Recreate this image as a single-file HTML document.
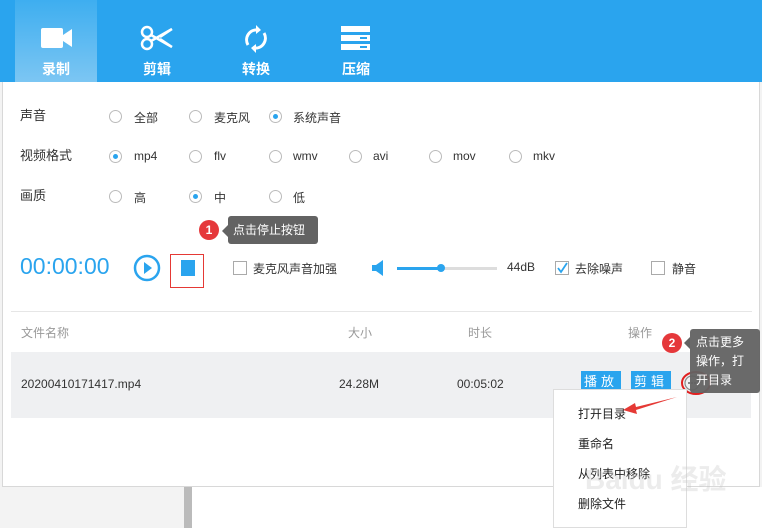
<!DOCTYPE html>
<html><head><meta charset="utf-8"><style>
*{margin:0;padding:0;box-sizing:border-box}
body{width:762px;height:528px;position:relative;overflow:hidden;background:#f3f3f3;font-family:"Liberation Sans","Noto Sans CJK SC",sans-serif;font-size:13px;color:#333}
.a{position:absolute}
.win{left:2px;top:0;width:758px;height:487px;background:#fff;border:1px solid #d8d8d8;border-top:none}
.top{left:0;top:0;width:762px;height:82px;background:#2aa4ee}
.tab{top:0;width:82px;height:82px;color:#fff;font-size:14px;font-weight:bold;text-align:center}
.tab span{position:absolute;left:0;right:0;top:59px}
.lbl{font-size:13px;color:#333}
.r{width:13px;height:13px;border:1px solid #bbb;border-radius:50%}
.r.on::after{content:"";position:absolute;left:3px;top:3px;width:5px;height:5px;border-radius:50%;background:#2aa4ee}
.cb{width:14px;height:14px;border:1px solid #aaa;background:#fff}
.t{font-size:12px;color:#333}
.g{color:#999;font-size:12px}
.btn{background:#2aa4ee;color:#fff;font-size:13px;height:22px;line-height:22px;text-align:center;letter-spacing:4px}
.tip{background:#636363;color:#fff;font-size:12px;border-radius:3px}
.num{width:20px;height:20px;border-radius:50%;background:#e5383b;color:#fff;font-size:12px;font-weight:bold;text-align:center;line-height:20px}
.mi{font-size:12px;color:#222;left:578px}
</style></head><body>
<div class="a" style="left:184px;top:487px;width:8px;height:41px;background:#bbb"></div>
<div class="a" style="left:192px;top:487px;width:570px;height:41px;background:#fff"></div>
<div class="a win"></div>
<div class="a top"></div>
<div class="a tab" style="left:15px;background:linear-gradient(#3eaef0,#7cc6f3)">
<svg class="a" style="left:26px;top:27px" width="32" height="22"><rect x="0" y="1" width="22" height="20" rx="2" fill="#fff"/><path d="M22 8 L31 2 V20 L22 14Z" fill="#fff"/></svg><span>录制</span></div>
<div class="a tab" style="left:116px">
<svg class="a" style="left:24px;top:25px" width="34" height="26" fill="none" stroke="#fff" stroke-width="2.5"><circle cx="7" cy="7" r="5"/><circle cx="7" cy="19" r="5"/><path d="M11 10 L32 22 M11 16 L32 4 M20 12 L32 4 M20 14 L32 22"/></svg><span>剪辑</span></div>
<div class="a tab" style="left:215px">
<svg class="a" style="left:27px;top:23px" width="28" height="32" fill="none" stroke="#fff" stroke-width="3"><path d="M6 22 A10 10 0 0 1 16 7"/><path d="M22 10 A10 10 0 0 1 12 25"/><path d="M14 2 L19 7 L14 11Z M14 21 L9 25 L14 30Z" fill="#fff" stroke="none"/></svg><span>转换</span></div>
<div class="a tab" style="left:315px">
<svg class="a" style="left:26px;top:26px" width="30" height="24"><rect x="0" y="0" width="29" height="6" fill="#fff"/><rect x="0" y="9" width="29" height="6" fill="#fff"/><rect x="0" y="18" width="29" height="6" fill="#fff"/><rect x="19" y="11" width="7" height="2" fill="#2aa4ee"/><rect x="19" y="20" width="7" height="2" fill="#2aa4ee"/></svg><span>压缩</span></div>

<div class="a lbl" style="left:20px;top:105px">声音</div>
<div class="a lbl" style="left:20px;top:145px">视频格式</div>
<div class="a lbl" style="left:20px;top:185px">画质</div>
<div class="a r" style="left:109px;top:110px"></div><div class="a t" style="left:134px;top:109px">全部</div>
<div class="a r" style="left:189px;top:110px"></div><div class="a t" style="left:214px;top:109px">麦克风</div>
<div class="a r on" style="left:269px;top:110px"></div><div class="a t" style="left:293px;top:109px">系统声音</div>
<div class="a r on" style="left:109px;top:150px"></div><div class="a t" style="left:134px;top:149px">mp4</div>
<div class="a r" style="left:189px;top:150px"></div><div class="a t" style="left:214px;top:149px">flv</div>
<div class="a r" style="left:269px;top:150px"></div><div class="a t" style="left:293px;top:149px">wmv</div>
<div class="a r" style="left:349px;top:150px"></div><div class="a t" style="left:373px;top:149px">avi</div>
<div class="a r" style="left:429px;top:150px"></div><div class="a t" style="left:453px;top:149px">mov</div>
<div class="a r" style="left:509px;top:150px"></div><div class="a t" style="left:533px;top:149px">mkv</div>
<div class="a r" style="left:109px;top:190px"></div><div class="a t" style="left:134px;top:189px">高</div>
<div class="a r on" style="left:189px;top:190px"></div><div class="a t" style="left:214px;top:189px">中</div>
<div class="a r" style="left:269px;top:190px"></div><div class="a t" style="left:293px;top:189px">低</div>

<div class="a num" style="left:199px;top:220px">1</div>
<div class="a tip" style="left:228px;top:216px;width:90px;height:28px;line-height:28px;padding-left:5px">点击停止按钮</div>
<div class="a" style="left:222px;top:225px;border:6px solid transparent;border-right-color:#636363;border-left:none"></div>

<div class="a" style="left:20px;top:253px;font-size:23px;color:#2aa4ee">00:00:00</div>
<svg class="a" style="left:133px;top:254px" width="28" height="28"><circle cx="14" cy="14" r="12" fill="none" stroke="#2aa4ee" stroke-width="2.5"/><path d="M11 8 L19 14 L11 20Z" fill="#2aa4ee"/></svg>
<div class="a" style="left:170px;top:254px;width:34px;height:34px;border:1px solid #e53935"></div>
<div class="a" style="left:181px;top:260px;width:14px;height:16px;background:#2aa4ee"></div>
<div class="a cb" style="left:233px;top:261px"></div><div class="a t" style="left:253px;top:260px">麦克风声音加强</div>
<svg class="a" style="left:372px;top:259px" width="14" height="18"><path d="M0 6 H4 L11 1 V17 L4 12 H0Z" fill="#2aa4ee"/></svg>
<div class="a" style="left:397px;top:267px;width:100px;height:3px;background:#ddd"></div>
<div class="a" style="left:397px;top:267px;width:44px;height:3px;background:#2aa4ee"></div>
<div class="a" style="left:437px;top:264px;width:8px;height:8px;border-radius:50%;background:#2aa4ee"></div>
<div class="a t" style="left:507px;top:260px">44dB</div>
<div class="a cb" style="left:555px;top:261px"></div>
<svg class="a" style="left:556px;top:262px" width="12" height="12"><path d="M2 6 L5 10 L11 1" fill="none" stroke="#2aa4ee" stroke-width="1.8"/></svg>
<div class="a t" style="left:575px;top:260px">去除噪声</div>
<div class="a cb" style="left:651px;top:261px"></div><div class="a t" style="left:672px;top:260px">静音</div>

<div class="a" style="left:11px;top:311px;width:741px;height:1px;background:#e6e6e6"></div>
<div class="a g" style="left:21px;top:324px">文件名称</div>
<div class="a g" style="left:348px;top:324px">大小</div>
<div class="a g" style="left:468px;top:324px">时长</div>
<div class="a g" style="left:628px;top:324px">操作</div>
<div class="a" style="left:11px;top:352px;width:740px;height:66px;background:#eff0f2"></div>
<div class="a t" style="left:21px;top:377px">20200410171417.mp4</div>
<div class="a t" style="left:339px;top:377px">24.28M</div>
<div class="a t" style="left:457px;top:377px">00:05:02</div>
<div class="a btn" style="left:581px;top:371px;width:40px">播放</div>
<div class="a btn" style="left:631px;top:371px;width:40px">剪辑</div>
<svg class="a" style="left:674px;top:366px" width="40" height="34"><circle cx="18" cy="17" r="7" fill="none" stroke="#888" stroke-width="1.2"/><circle cx="15" cy="17" r="1" fill="#666"/><circle cx="18" cy="17" r="1" fill="#666"/><circle cx="21" cy="17" r="1" fill="#666"/><ellipse cx="22" cy="17" rx="14" ry="11" fill="none" stroke="#e02020" stroke-width="2"/></svg>

<div class="a num" style="left:662px;top:333px">2</div>
<div class="a" style="left:684px;top:337px;border:6px solid transparent;border-right-color:#636363;border-left:none"></div>
<div class="a tip" style="left:690px;top:329px;width:70px;height:64px;padding:4px 6px;line-height:19px;opacity:.95">点击更多操作，打开目录</div>

<div class="a" style="left:553px;top:389px;width:134px;height:139px;background:#fff;border:1px solid #ddd"></div>
<div class="a mi" style="top:405px">打开目录</div>
<div class="a mi" style="top:435px">重命名</div>
<div class="a mi" style="top:465px">从列表中移除</div>
<div class="a mi" style="top:495px">删除文件</div>
<svg class="a" style="left:622px;top:396px" width="56" height="22"><path d="M55 1 L14 11 L13 7 L1 14 L15 18 L14 14Z" fill="#e53935"/></svg>
<div class="a" style="left:585px;top:458px;font-size:28px;font-weight:bold;color:rgba(200,200,200,.35)">Baidu 经验</div>
</body></html>
